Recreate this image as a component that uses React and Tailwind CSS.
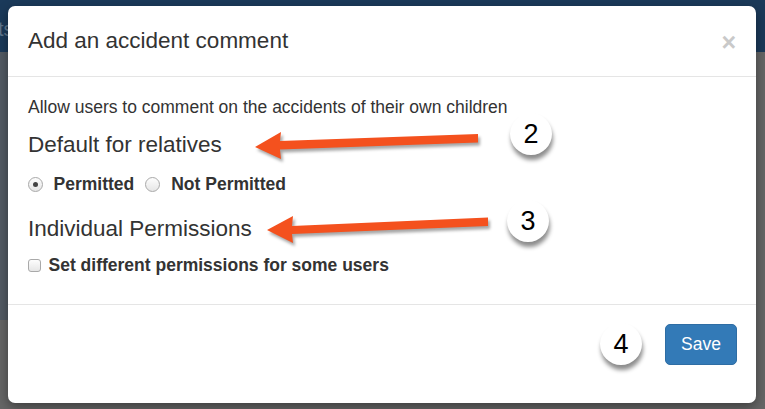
import React from "react";

const font = { fontFamily: '"Liberation Sans", Arial, sans-serif' };

function Radio({ checked }) {
  return (
    <span className="flex h-[15px] w-[15px] shrink-0 items-center justify-center rounded-full border border-[#a9a9a9] bg-gradient-to-b from-[#fdfdfd] to-[#e6e6e6]">
      {checked && <span className="h-[5px] w-[5px] rounded-full bg-[#444]" />}
    </span>
  );
}

function Bubble({ n, className }) {
  return (
    <div
      className={
        "absolute flex h-[42px] w-[42px] items-center justify-center rounded-full bg-white text-[27px] text-black shadow-[1px_5px_4px_rgba(0,0,0,0.45)] " +
        className
      }
    >
      {n}
    </div>
  );
}

export default function App() {
  return (
    <div className="relative h-[409px] w-[765px] overflow-hidden bg-[#666]" style={font}>
      {/* backdrop page */}
      <div className="flex h-[52px] items-center bg-[#1b3a5a] pl-0 text-[20px] text-[#5f7890]">
        <span className="-ml-[2px] mt-[6px]">ts</span>
      </div>
      <div className="flex">
        <div className="h-[268px] w-[10px] bg-[#535b64]" />
      </div>

      {/* modal */}
      <div className="absolute left-[8px] top-[6px] flex h-[397px] w-[748px] flex-col rounded-[7px] bg-white text-[#333] shadow-[0_4px_12px_rgba(0,0,0,0.4)]">
        <div className="flex items-start justify-between border-b border-[#e5e5e5] px-[20px] py-[18.5px]">
          <h4 className="text-[22.5px] leading-[32px]">Add an accident comment</h4>
          <span className="mt-[1px] text-[25px] font-bold leading-[32px] text-[#c9c9c9]">×</span>
        </div>
        <div className="h-[227px] px-[20px] pt-[17.5px]">
          <p className="text-[17.5px] leading-[25px]">
            Allow users to comment on the accidents of their own children
          </p>
          <h4 className="mt-[12.5px] text-[22.5px] leading-[25px]">Default for relatives</h4>
          <div className="mt-[15px] flex items-center text-[17.5px] font-bold leading-[25px]">
            <span className="-ml-[0.5px]">
              <Radio checked />
            </span>
            <span className="ml-[11px]">Permitted</span>
            <span className="ml-[10.5px]">
              <Radio />
            </span>
            <span className="ml-[11.5px]">Not Permitted</span>
          </div>
          <h4 className="mt-[18.5px] text-[22.5px] leading-[25px]">Individual Permissions</h4>
          <div className="mt-[12.5px] flex items-center text-[17.5px] font-bold leading-[25px]">
            <span className="-ml-[0.5px] h-[13.5px] w-[13.5px] rounded-[3px] border border-[#a9a9a9] bg-gradient-to-b from-[#fdfdfd] to-[#e6e6e6]" />
            <span className="ml-[7.5px]">Set different permissions for some users</span>
          </div>
        </div>
        <div className="flex flex-1 justify-end border-t border-[#e5e5e5] pr-[19px] pt-[19px]">
          <button className="h-[41px] w-[72px] rounded-[5px] border border-[#2e6da4] bg-[#337ab7] text-[17.5px] text-white">
            Save
          </button>
        </div>
      </div>

      {/* annotations */}
      <svg
        className="pointer-events-none absolute left-0 top-0 drop-shadow-[2px_3px_1.5px_rgba(0,0,0,0.35)]"
        width="765"
        height="409"
        viewBox="0 0 765 409"
      >
        <polygon
          fill="#f4511e"
          points="255,147 281,132 280,141 478,134 478,142.5 280,149.5 281,159"
        />
        <polygon
          fill="#f4511e"
          points="267,230 293,216 292,226 488,217.5 488,226 292,234 293,243"
        />
      </svg>
      <Bubble n="2" className="left-[510px] top-[113px]" />
      <Bubble n="3" className="left-[507px] top-[200px]" />
      <Bubble n="4" className="left-[600px] top-[323px]" />
    </div>
  );
}
